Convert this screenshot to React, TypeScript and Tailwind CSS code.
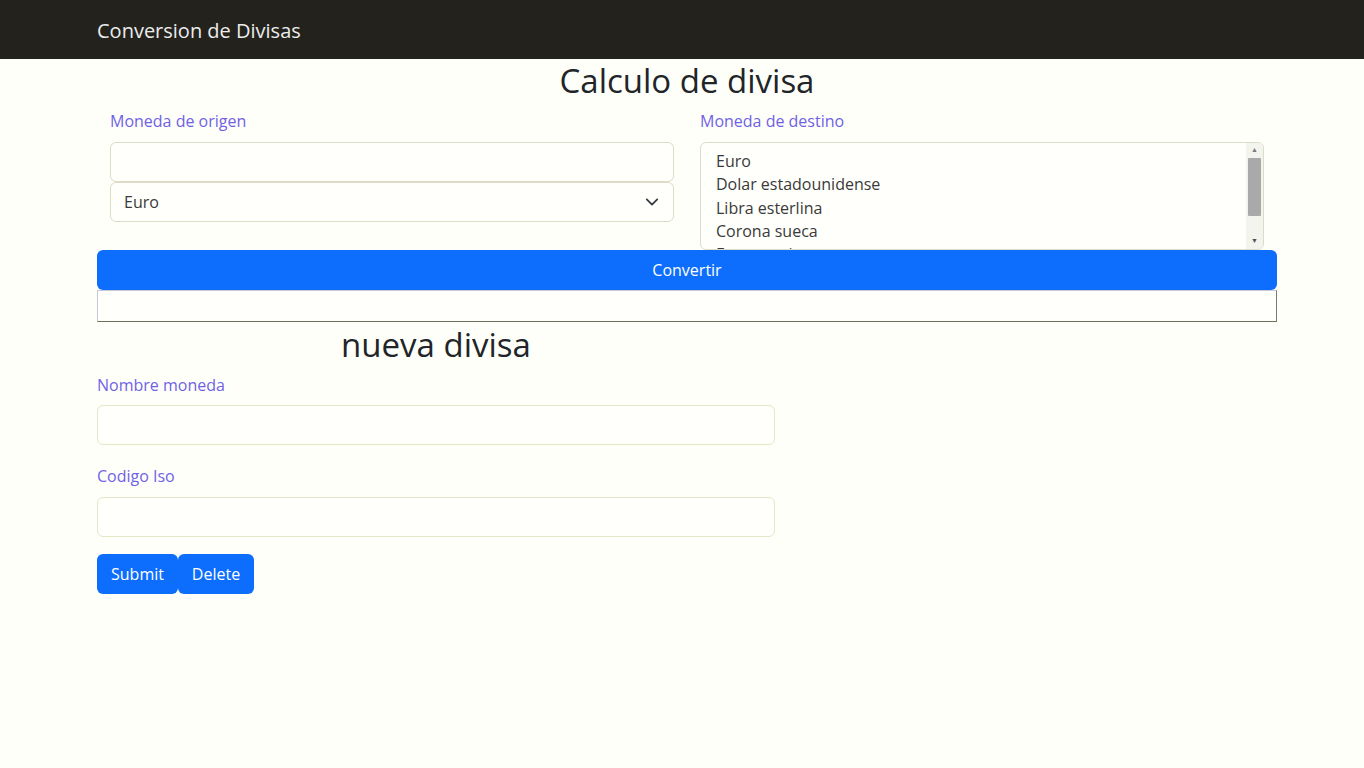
import React from "react";

const font = { fontFamily: '"Open Sans", "Lato", sans-serif' };

function Chevron() {
  return (
    <svg width="14" height="14" viewBox="0 0 16 16" fill="none" className="text-[#343a40]">
      <path d="M2 5l6 6 6-6" stroke="currentColor" strokeWidth="2" strokeLinecap="round" strokeLinejoin="round" />
    </svg>
  );
}

export default function App() {
  const monedas = ["Euro", "Dolar estadounidense", "Libra esterlina", "Corona sueca", "Franco suizo"];

  return (
    <div className="min-h-[768px] w-full bg-[#fffffa] text-[#212529]" style={font}>
      {/* Navbar */}
      <nav className="h-[59px] bg-[#23221d] flex items-center">
        <span className="ml-[97px] mt-[3px] text-[20px] text-[#ececec]">Conversion de Divisas</span>
      </nav>

      <div className="ml-[97px] w-[1180px]">
        <h1 className="text-center text-[33px] font-medium leading-[44px]">Calculo de divisa</h1>

        <div className="grid grid-cols-2">
          <div className="px-[13px]">
            <label className="block text-[16px] leading-[24px] text-[#6f62e6] mt-[6px]">Moneda de origen</label>
            <div className="mt-[9px] h-[40px] rounded-[6px] border border-[#dcdcc8] bg-[#fffffc]" />
            <div className="h-[40px] rounded-[6px] border border-[#dcdcc8] bg-[#fffffc] flex items-center justify-between pl-[13px] pr-[14px]">
              <span className="text-[16px] text-[#3a3a3a]">Euro</span>
              <Chevron />
            </div>
          </div>
          <div className="px-[13px]">
            <label className="block text-[16px] leading-[24px] text-[#6f62e6] mt-[6px]">Moneda de destino</label>
            <div className="mt-[9px] h-[108px] rounded-[6px] border border-[#dcdcc8] bg-[#fffffc] flex overflow-hidden">
              <div className="flex-1 pl-[15px] pt-[7px]">
                {monedas.map((m) => (
                  <div key={m} className="text-[16px] leading-[23.3px] text-[#3a3a3a]">{m}</div>
                ))}
              </div>
              <div className="w-[17px] flex flex-col items-center bg-[#f4f4ee]">
                <div className="h-[15px] flex items-center justify-center text-[7px] text-[#7a7a7a]">▲</div>
                <div className="w-[13px] h-[58px] bg-[#a9a9a9] rounded-[1px]" />
                <div className="flex-1" />
                <div className="h-[15px] flex items-center justify-center text-[7px] text-[#505050]">▼</div>
              </div>
            </div>
          </div>
        </div>

        <button className="w-full h-[40px] rounded-[6px] bg-[#0d6efd] text-white text-[16px]">Convertir</button>
        <div className="h-[32px] w-full border border-t-[#c8c8d8] border-l-[#c8c8d8] border-b-[#6e6e5a] border-r-[#7a7a7a] bg-[#fffffc]" />

        <div className="w-[678px]">
          <h2 className="text-center text-[33px] font-medium leading-[44px] mt-[1px]">nueva divisa</h2>
          <label className="block mt-[6px] text-[16px] leading-[24px] text-[#6f62e6]">Nombre moneda</label>
          <div className="mt-[8px] h-[40px] rounded-[6px] border border-[#e6e6c8] bg-[#fffffc]" />
          <label className="block mt-[19px] text-[16px] leading-[24px] text-[#6f62e6]">Codigo Iso</label>
          <div className="mt-[9px] h-[40px] rounded-[6px] border border-[#e6e6c8] bg-[#fffffc]" />
          <div className="flex mt-[17px]">
            <button className="h-[40px] w-[81px] rounded-[6px] bg-[#0d6efd] text-white text-[16px]">Submit</button>
            <button className="h-[40px] w-[76px] rounded-[6px] bg-[#0d6efd] text-white text-[16px]">Delete</button>
          </div>
        </div>
      </div>
    </div>
  );
}
